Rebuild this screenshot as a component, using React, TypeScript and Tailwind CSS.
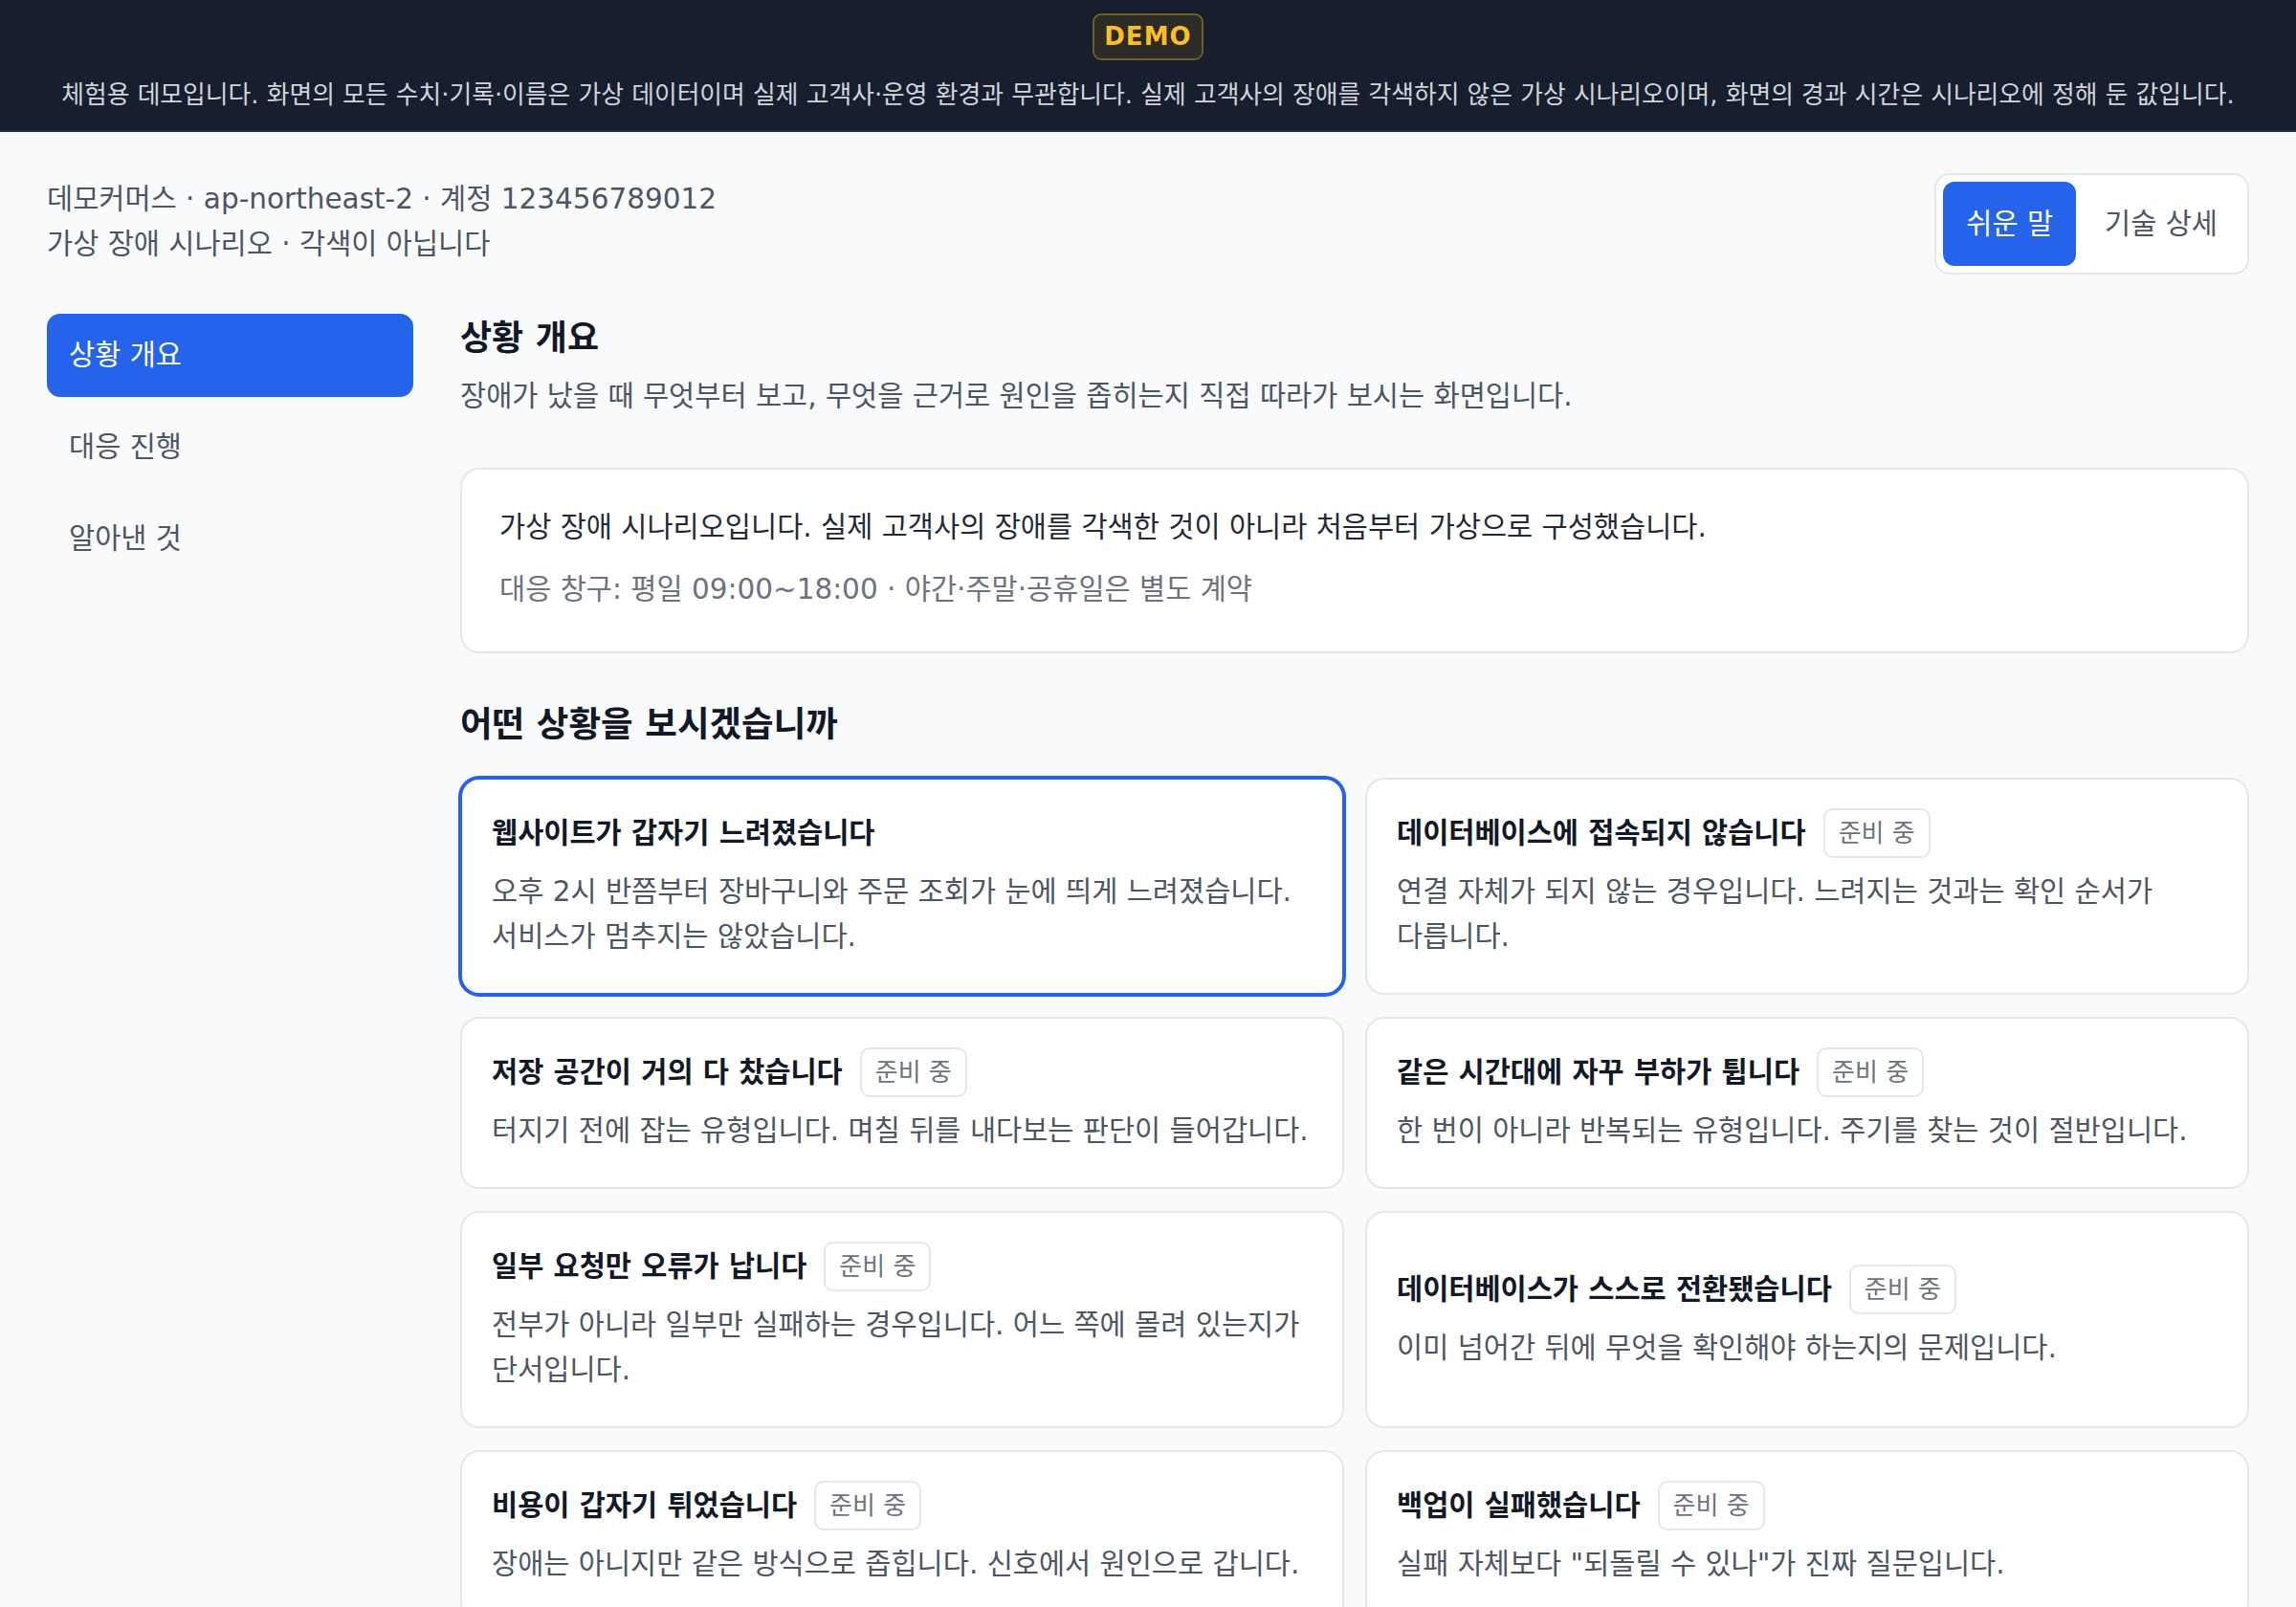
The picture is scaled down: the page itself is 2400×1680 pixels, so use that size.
import React, { useState } from 'react';

const scenarios = [
  {
    title: '웹사이트가 갑자기 느려졌습니다',
    desc: '오후 2시 반쯤부터 장바구니와 주문 조회가 눈에 띄게 느려졌습니다. 서비스가 멈추지는 않았습니다.',
    ready: true,
  },
  { title: '데이터베이스에 접속되지 않습니다', desc: '연결 자체가 되지 않는 경우입니다. 느려지는 것과는 확인 순서가 다릅니다.' },
  { title: '저장 공간이 거의 다 찼습니다', desc: '터지기 전에 잡는 유형입니다. 며칠 뒤를 내다보는 판단이 들어갑니다.' },
  { title: '같은 시간대에 자꾸 부하가 튑니다', desc: '한 번이 아니라 반복되는 유형입니다. 주기를 찾는 것이 절반입니다.' },
  { title: '일부 요청만 오류가 납니다', desc: '전부가 아니라 일부만 실패하는 경우입니다. 어느 쪽에 몰려 있는지가 단서입니다.' },
  { title: '데이터베이스가 스스로 전환됐습니다', desc: '이미 넘어간 뒤에 무엇을 확인해야 하는지의 문제입니다.' },
  { title: '비용이 갑자기 튀었습니다', desc: '장애는 아니지만 같은 방식으로 좁힙니다. 신호에서 원인으로 갑니다.' },
  { title: '백업이 실패했습니다', desc: '실패 자체보다 "되돌릴 수 있나"가 진짜 질문입니다.' },
];

const navItems = ['상황 개요', '대응 진행', '알아낸 것'];

const App = () => {
  const [mode, setMode] = useState('easy');
  const [nav, setNav] = useState(0);
  const [selected, setSelected] = useState(0);

  return (
    <div className="min-h-screen bg-[#f9fafb] break-keep font-['DejaVu_Sans','Noto_Sans_CJK_KR',sans-serif]">
      {/* demo banner */}
      <div className="bg-[#171f2e] border-b-2 border-[#262e3d] pt-[14px] pb-[18px] flex flex-col items-center">
        <span className="h-[49px] px-[10px] flex items-center rounded-[9px] border-2 border-[#6f5d2d] bg-[#2c2b25] text-[#fbbf24] text-[26px] font-bold tracking-[0.04em]">
          DEMO
        </span>
        <p className="mt-[17px] text-[25.8px] leading-[38px] text-[#d1d5db]">
          체험용 데모입니다. 화면의 모든 수치·기록·이름은 가상 데이터이며 실제 고객사·운영 환경과 무관합니다. 실제 고객사의 장애를 각색하지 않은 가상 시나리오이며, 화면의 경과 시간은 시나리오에 정해 둔 값입니다.
        </p>
      </div>

      <div className="px-[49px] pt-[43px] pb-[60px]">
        {/* header */}
        <div className="flex items-start justify-between">
          <div className="pt-[6px] text-[29.5px] leading-[42px] text-[#4b5563]">
            <div>데모커머스 · ap-northeast-2 · 계정 123456789012</div>
            <div className="mt-[5px]">가상 장애 시나리오 · 각색이 아닙니다</div>
          </div>
          <div className="flex gap-[6px] rounded-[16px] border-2 border-[#e5e7eb] bg-white p-[7px]">
            <button
              onClick={() => setMode('easy')}
              className={
                mode === 'easy'
                  ? 'h-[88px] px-[24px] rounded-[12px] bg-[#2563eb] text-white text-[29.5px]'
                  : 'h-[88px] px-[24px] rounded-[12px] text-[#4b5563] text-[29.5px]'
              }
            >
              쉬운 말
            </button>
            <button
              onClick={() => setMode('tech')}
              className={
                mode === 'tech'
                  ? 'h-[88px] px-[24px] rounded-[12px] bg-[#2563eb] text-white text-[29.5px]'
                  : 'h-[88px] px-[24px] rounded-[12px] text-[#4b5563] text-[29.5px]'
              }
            >
              기술 상세
            </button>
          </div>
        </div>

        <div className="mt-[41px] flex gap-[49px]">
          {/* sidebar */}
          <nav className="w-[383px] shrink-0 flex flex-col gap-[9px]">
            {navItems.map((item, i) => (
              <button
                key={item}
                onClick={() => setNav(i)}
                className={
                  nav === i
                    ? 'h-[87px] px-[23px] flex items-center rounded-[14px] bg-[#2563eb] text-white text-[29.5px]'
                    : 'h-[87px] px-[23px] flex items-center rounded-[14px] text-[#4b5563] text-[29.5px]'
                }
              >
                {item}
              </button>
            ))}
          </nav>

          {/* main */}
          <main className="flex-1 min-w-0">
            <h1 className="text-[36px] leading-[52px] font-bold text-[#111827]">상황 개요</h1>
            <p className="mt-[13px] text-[29.5px] leading-[42px] text-[#4b5563]">
              장애가 났을 때 무엇부터 보고, 무엇을 근거로 원인을 좁히는지 직접 따라가 보시는 화면입니다.
            </p>

            <div className="mt-[54px] rounded-[20px] border-2 border-[#e5e7eb] bg-white px-[39px] pt-[39px] pb-[44px]">
              <p className="text-[29.5px] leading-[42px] text-[#1f2937]">
                가상 장애 시나리오입니다. 실제 고객사의 장애를 각색한 것이 아니라 처음부터 가상으로 구성했습니다.
              </p>
              <p className="mt-[23px] text-[29.5px] leading-[42px] text-[#6b7280]">
                대응 창구: 평일 09:00~18:00 · 야간·주말·공휴일은 별도 계약
              </p>
            </div>

            <h2 className="mt-[49px] text-[36.5px] leading-[52px] font-bold text-[#111827]">어떤 상황을 보시겠습니까</h2>

            <div className="mt-[29px] grid grid-cols-2 gap-x-[22px] gap-y-[23px]">
              {scenarios.map((s, i) => (
                <div
                  key={s.title}
                  onClick={() => setSelected(i)}
                  className={
                    selected === i
                      ? 'flex flex-col justify-center rounded-[20px] border-2 border-[#2563eb] ring-2 ring-[#2563eb] bg-white pl-[31px] pr-[22px] pt-[30px] pb-[35px] cursor-pointer'
                      : 'flex flex-col justify-center rounded-[20px] border-2 border-[#e5e7eb] bg-white pl-[31px] pr-[22px] pt-[30px] pb-[35px] cursor-pointer'
                  }
                >
                  <div className="h-[52px] flex items-center gap-[18px]">
                    <span className="text-[29.5px] leading-[42px] font-bold text-[#111827]">{s.title}</span>
                    {!s.ready && (
                      <span className="px-[14px] py-[6px] rounded-[10px] border-2 border-[#e5e7eb] text-[26px] leading-[36px] text-[#6b7280]">
                        준비 중
                      </span>
                    )}
                  </div>
                  <p className="mt-[12px] text-[29.5px] leading-[47px] text-[#4b5563]">{s.desc}</p>
                </div>
              ))}
            </div>
          </main>
        </div>
      </div>
    </div>
  );
};

export default App;
